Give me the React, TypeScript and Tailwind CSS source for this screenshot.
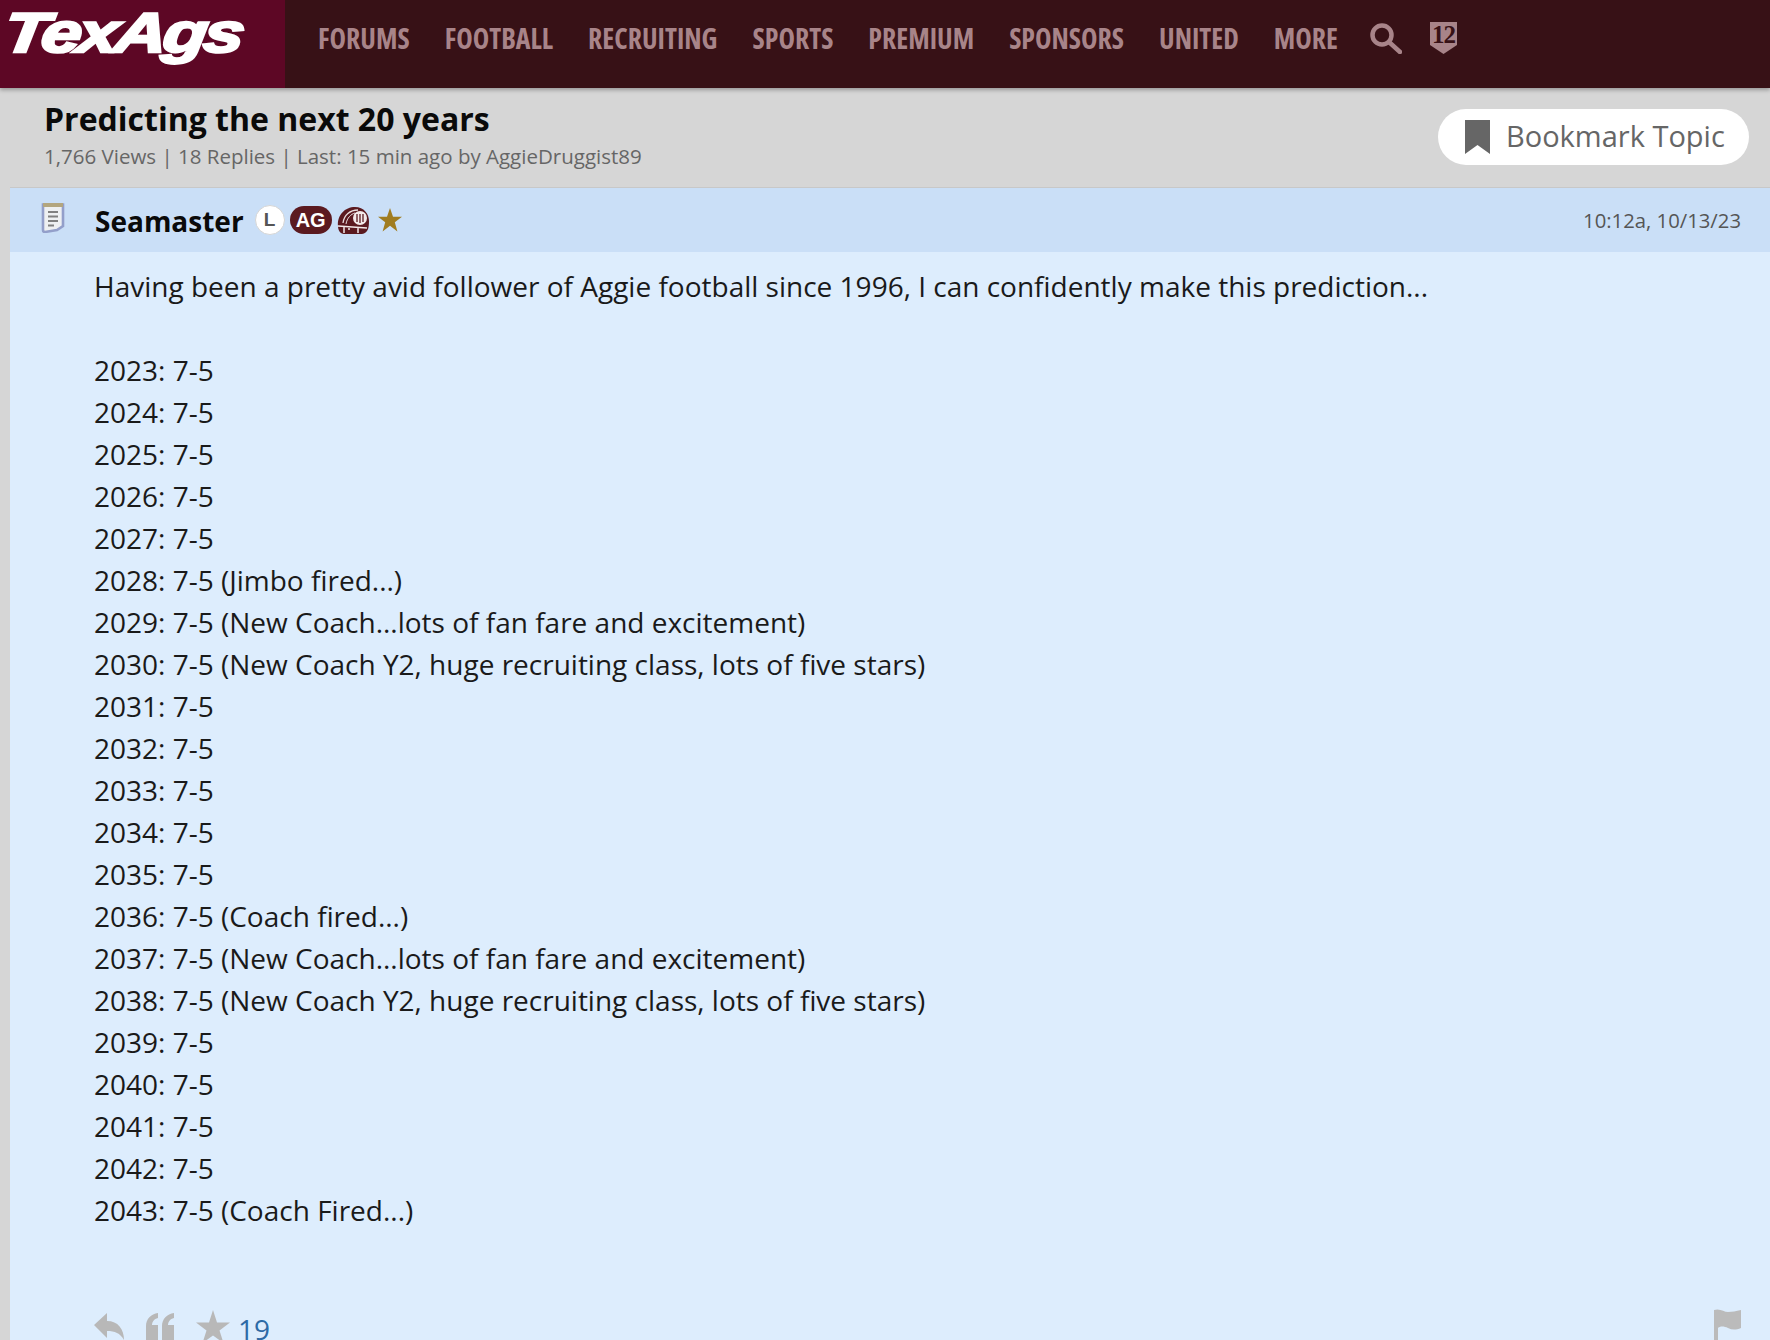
const navItems = ["FORUMS", "FOOTBALL", "RECRUITING", "SPORTS", "PREMIUM", "SPONSORS", "UNITED", "MORE"];

const postLines = [
  "Having been a pretty avid follower of Aggie football since 1996, I can confidently make this prediction...",
  "",
  "2023: 7-5",
  "2024: 7-5",
  "2025: 7-5",
  "2026: 7-5",
  "2027: 7-5",
  "2028: 7-5 (Jimbo fired...)",
  "2029: 7-5 (New Coach...lots of fan fare and excitement)",
  "2030: 7-5 (New Coach Y2, huge recruiting class, lots of five stars)",
  "2031: 7-5",
  "2032: 7-5",
  "2033: 7-5",
  "2034: 7-5",
  "2035: 7-5",
  "2036: 7-5 (Coach fired...)",
  "2037: 7-5 (New Coach...lots of fan fare and excitement)",
  "2038: 7-5 (New Coach Y2, huge recruiting class, lots of five stars)",
  "2039: 7-5",
  "2040: 7-5",
  "2041: 7-5",
  "2042: 7-5",
  "2043: 7-5 (Coach Fired...)",
];

function SearchIcon() {
  return (
    <svg viewBox="0 0 32 31" className="ml-[-3px] mt-[5px] h-[31px] w-[32px]" fill="none" stroke="#a88489">
      <circle cx="12" cy="12" r="9.500" strokeWidth="4.500" />
      <path d="M19 19L30 29" strokeWidth="4.500" strokeLinecap="round" />
    </svg>
  );
}

function Shield() {
  return (
    <div className="relative ml-[-7px] mt-[4px] h-[32px] w-[27px]">
      <svg viewBox="0 0 27 32" className="h-full w-full" fill="#a88489">
        <path d="M0 0H27V23L13.500 32L0 23Z" />
      </svg>
      <span className="absolute left-0 right-0 top-[2px] text-center font-['Liberation_Serif',serif] text-[25px] font-bold leading-[22px] tracking-[-1px] text-[#371116]">
        12
      </span>
    </div>
  );
}

function Notepad() {
  return (
    <svg viewBox="0 0 24 31" className="h-[31px] w-[24px]">
      <path d="M2 2.500H22V24L16 28L4 30Q2 30 2 28Z" fill="#eef0f2" stroke="#939fca" strokeWidth="2.600" />
      <path d="M2 1H22V5H2Z" fill="#b3a67f" />
      <path d="M7 10H17M7 14.500H17M7 19H17M7 23.500H13" stroke="#808080" strokeWidth="2" />
    </svg>
  );
}

function Helmet() {
  return (
    <svg viewBox="0 0 34 29" className="h-[29px] w-[34px]">
      <path d="M2 20C1 9 9 1 19 1C28 1 33 8 33 15C33 22 32 27 26 28H8C4 28 2 24 2 20Z" fill="#5b1a20" />
      <path d="M7 17C8 9 14 4 22 4" stroke="#e9dede" strokeWidth="1.300" fill="none" />
      <path d="M10 18C11 12 15 8 19 7" stroke="#e9dede" strokeWidth="1" fill="none" />
      <circle cx="24" cy="12" r="7" fill="#f3eaea" />
      <path d="M21 8V16M24 8V17M27 8V16" stroke="#5b1a20" strokeWidth="1.300" />
      <path d="M2 20L31 22M8 21V27M13 22V24M22 22V27" stroke="#f3eaea" strokeWidth="1.500" />
    </svg>
  );
}

export default function App() {
  return (
    <div className="flex h-[1340px] flex-col overflow-hidden bg-[#d6d6d6] font-['Open_Sans',sans-serif]">
      <header className="z-10 flex h-[88px] shrink-0 bg-[#371116] shadow-[0_2px_4px_rgba(0,0,0,0.3)]">
        <div className="flex w-[285px] shrink-0 items-start overflow-hidden bg-[#5d0725] pl-[4px] pt-[1px]">
          <span className="inline-block origin-left scale-x-[1.3] -skew-x-6 font-['Liberation_Sans',sans-serif] text-[56px] font-bold italic leading-[64px] tracking-[-3px] text-white [-webkit-text-stroke:2.5px_white]">
            TexAgs
          </span>
        </div>
        <nav className="flex items-start gap-[35px] pl-[33px] pt-[18px]">
          {navItems.map((item) => (
            <span key={item} className="text-[27.85px] font-bold leading-[40px] text-[#a88489] [font-stretch:75%]">
              {item}
            </span>
          ))}
          <SearchIcon />
          <Shield />
        </nav>
      </header>
      <main className="ml-[10px] flex min-h-0 flex-1 flex-col">
        <div className="flex h-[100px] shrink-0 items-center justify-between border-b border-[#c8c8c8] pl-[34px] pr-[21px]">
          <div className="self-start pt-[11px]">
            <h1 className="text-[32px] font-bold leading-[40px] text-[#0a0a0a]">Predicting the next 20 years</h1>
            <p className="mt-[3px] text-[20.5px] leading-[28px] text-[#666]">1,766 Views | 18 Replies | Last: 15 min ago by AggieDruggist89</p>
          </div>
          <button className="mb-[2px] flex h-[56px] w-[311px] items-center gap-[16px] rounded-full bg-white pl-[27px] text-[29px] leading-[36px] text-[#666]">
            <svg viewBox="0 0 25 34" className="h-[34px] w-[25px]" fill="#666">
              <path d="M0 0H25V34L12.500 25L0 34Z" />
            </svg>
            <span className="mb-[1px]">Bookmark Topic</span>
          </button>
        </div>
        <div className="flex h-[64px] shrink-0 items-center bg-[#cadff7] pl-[31px] pr-[29px]">
          <div className="mb-[5px]"><Notepad /></div>
          <span className="ml-[30px] mt-[2px] text-[28px] font-bold text-[#0a0a0a]">Seamaster</span>
          <span className="ml-[11px] flex h-[30px] w-[30px] items-center justify-center rounded-full border border-[#d5d5d5] bg-white font-['Liberation_Sans',sans-serif] text-[19px] font-bold text-[#555]">L</span>
          <span className="ml-[5px] flex h-[28px] w-[42px] items-center justify-center rounded-full bg-[#5b1a20] font-['Liberation_Sans',sans-serif] text-[20px] font-bold text-white">AG</span>
          <span className="ml-[4px]"><Helmet /></span>
          <svg viewBox="0 0 24 24" className="ml-[8px] h-[24px] w-[24px]" fill="#a07c20">
            <path d="M12 0L15 8.800H24L16.800 14.200L19.400 23.500L12 17.800L4.600 23.500L7.200 14.200L0 8.800H9Z" />
          </svg>
          <span className="ml-auto text-[20.3px] text-[#555]">10:12a, 10/13/23</span>
        </div>
        <div className="flex min-h-0 flex-1 flex-col bg-[#ddedfd] pl-[84px] pr-[29px] pt-[13px]">
          <div className="text-[28px] leading-[42px] text-[#1a1a1a]">
            {postLines.map((line, i) => (
              <div key={i} className="h-[42px]">{line}</div>
            ))}
          </div>
          <div className="mt-[82px] flex items-start">
            <svg viewBox="0 0 30 28" className="h-[28px] w-[30px]" fill="#b8b8b8">
              <path d="M0 12L13 0V8C24 8 30 16 30 27C26 20 21 18 13 18V25Z" />
            </svg>
            <svg viewBox="0 0 28 28" className="ml-[22px] h-[28px] w-[28px]" fill="#b8b8b8">
              <path d="M12 0V5C8 6 6 9 6 12H12V28H0V13C0 6 5 1 12 0ZM28 0V5C24 6 22 9 22 12H28V28H16V13C16 6 21 1 28 0Z" />
            </svg>
            <svg viewBox="0 0 34 34" className="ml-[22px] mt-[-3px] h-[34px] w-[34px]" fill="#b8b8b8">
              <path d="M17 0L21 12.500H34L23.500 20.500L27.500 33L17 25.500L6.500 33L10.500 20.500L0 12.500H13Z" />
            </svg>
            <span className="ml-[8px] mt-[-3px] text-[28px] leading-[38px] text-[#2d6aa5]">19</span>
            <svg viewBox="0 0 28 34" className="ml-auto mr-[-1px] mt-[-4px] h-[34px] w-[28px]" fill="#bbb">
              <path d="M0 1C6 -1 10 3 14 3C18 3 22 2 27 1V19C22 21 18 21 14 19C10 17 6 17 4 19V34H0Z" />
            </svg>
          </div>
        </div>
      </main>
    </div>
  );
}
